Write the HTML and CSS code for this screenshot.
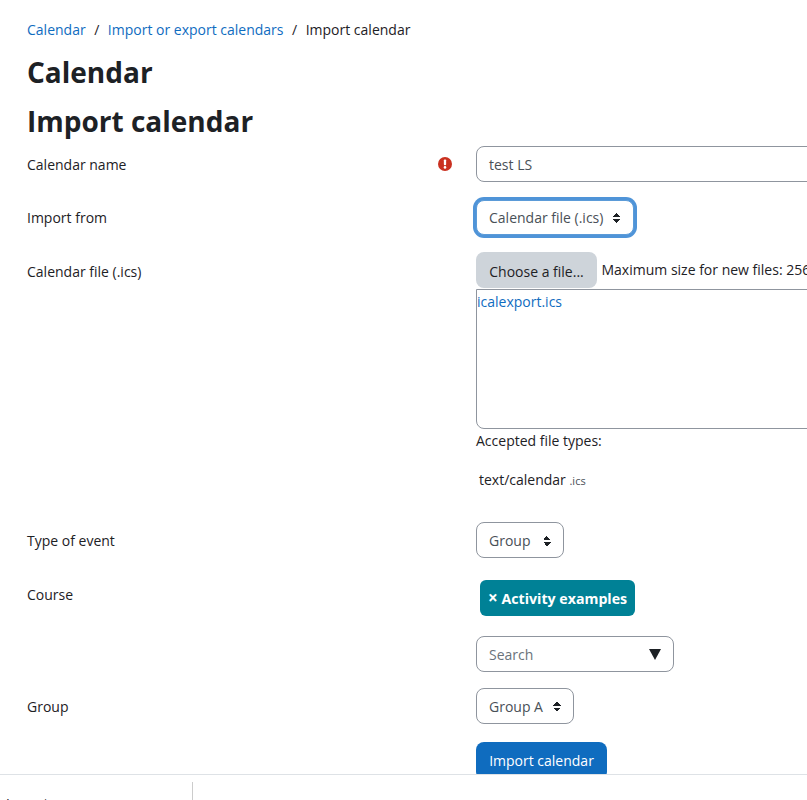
FILE: index.html
```html
<!DOCTYPE html>
<html lang="en">
<head>
    <meta charset="UTF-8">
    <title>Import calendar</title>
    <link rel="stylesheet" href="styles.css">
</head>
<body>
    <div class="page">
        <nav class="breadcrumb">
            <a href="#">Calendar</a>
            <span class="sep">/</span>
            <a href="#">Import or export calendars</a>
            <span class="sep">/</span>
            <span>Import calendar</span>
        </nav>
        <h2 class="title">Calendar</h2>
        <h2 class="title second">Import calendar</h2>

        <form class="form">
            <div class="row row-name">
                <label class="label">Calendar name</label>
                <svg class="required" viewBox="0 0 16 16" width="14" height="14">
                    <circle cx="8" cy="8" r="8" fill="#ca3120"/>
                    <rect x="6.7" y="2.8" width="2.6" height="6.6" rx="1" fill="#fff"/>
                    <circle cx="8" cy="11.9" r="1.5" fill="#fff"/>
                </svg>
                <div class="field"><div class="input wide">test LS</div></div>
            </div>
            <div class="row row-from">
                <label class="label">Import from</label>
                <div class="field">
                    <div class="select focused">Calendar file (.ics) <span class="arrows"></span></div>
                </div>
            </div>
            <div class="row row-file">
                <label class="label">Calendar file (.ics)</label>
                <div class="field">
                    <div class="picker">
                        <button type="button" class="btn-file">Choose a file...</button>
                        <span class="max">Maximum size for new files: 256 MB</span>
                    </div>
                    <div class="filebox"><a href="#">icalexport.ics</a></div>
                    <p class="accepted">Accepted file types:</p>
                    <p class="types">text/calendar <small>.ics</small></p>
                </div>
            </div>
            <div class="row row-type">
                <label class="label">Type of event</label>
                <div class="field">
                    <div class="select group">Group <span class="arrows"></span></div>
                </div>
            </div>
            <div class="row row-course">
                <label class="label">Course</label>
                <div class="field">
                    <div class="badge"><span class="times">×</span> Activity examples</div>
                    <div class="search">Search <span class="down"></span></div>
                </div>
            </div>
            <div class="row row-group">
                <label class="label">Group</label>
                <div class="field">
                    <div class="select group-a">Group A <span class="arrows"></span></div>
                </div>
            </div>
            <div class="row row-submit">
                <div class="label"></div>
                <div class="field"><button type="button" class="btn-primary">Import calendar</button></div>
            </div>
        </form>
    </div>

    <footer class="footer">
        <span class="footer-text">Jump to...</span>
        <span class="footer-line"></span>
    </footer>
</body>
</html>
```
FILE: styles.css
```css
html, body {
    margin: 0;
    height: 800px;
    overflow: hidden;
}
body {
    font-family: "Open Sans", "Noto Sans", Arial, sans-serif;
    font-size: 14px;
    color: #1d2125;
    background: #fff;
}
a {
    color: #0f6cbf;
    text-decoration: none;
}
.page {
    width: 1100px;
    padding: 20px 0 0 27px;
}
.breadcrumb {
    display: flex;
    gap: 8.5px;
    height: 20px;
    line-height: 20px;
}
.title {
    margin: 0;
    font-size: 28px;
    line-height: 40px;
    margin-top: 12px;
    font-weight: 700;
}
.title.second {
    margin-top: 9px;
}
.form {
    margin-top: 5px;
}
.row {
    display: grid;
    grid-template-columns: 449px 1fr;
    position: relative;
}
.label {
    line-height: 20px;
    padding-top: 9px;
}
.required {
    position: absolute;
    left: 411px;
    top: 11px;
}
.input, .select, .search {
    box-sizing: border-box;
    height: 36px;
    line-height: 36px;
    border: 1px solid #8f959e;
    border-radius: 8px;
    padding: 0 12px;
    color: #495057;
    background: #fff;
}
.input.wide {
    width: 500px;
}
.row-name {
    height: 53px;
}
.row-from {
    height: 53px;
}
.select {
    display: inline-flex;
    align-items: center;
    justify-content: space-between;
    padding-top: 2px;
}
.select.focused {
    width: 158px;
    height: 35px;
    margin-top: 1px;
    padding-top: 0;
    border-color: #5b9bd8;
    box-shadow: 0 0 0 3px #4f94d8;
}
.select.group {
    width: 88px;
}
.select.group-a {
    width: 98px;
}
.arrows {
    display: inline-block;
    width: 8px;
    height: 10px;
    flex: none;
    background:
        linear-gradient(to top right, transparent 50%, #1d2125 50%) 0 6px / 4px 4px no-repeat,
        linear-gradient(to top left, transparent 50%, #1d2125 50%) 4px 6px / 4px 4px no-repeat,
        linear-gradient(to bottom right, transparent 50%, #1d2125 50%) 0 0 / 4px 4px no-repeat,
        linear-gradient(to bottom left, transparent 50%, #1d2125 50%) 4px 0 / 4px 4px no-repeat;
}
.picker {
    display: flex;
    align-items: flex-start;
    gap: 4.5px;
    height: 37px;
}
.btn-file {
    width: 121px;
    height: 36px;
    padding: 2px 0 0;
    border: none;
    border-radius: 8px;
    background: #ced4da;
    color: #1d2125;
    font: inherit;
}
.max {
    line-height: 36px;
    white-space: nowrap;
}
.filebox {
    box-sizing: border-box;
    width: 500px;
    height: 140px;
    border: 1px solid #8f959e;
    border-radius: 0 0 8px 8px;
    line-height: 24px;
}
.accepted {
    margin: 2px 0 0;
    line-height: 20px;
}
.types {
    margin: 19px 0 0 3px;
    line-height: 20px;
}
.types small {
    font-size: 11px;
    color: #495057;
}
.row-file {
    height: 270px;
}
.row-file .label {
    padding-top: 10px;
}
.row-type {
    height: 54px;
}
.row-course {
    height: 112px;
}
.badge {
    display: inline-block;
    box-sizing: border-box;
    width: 155px;
    height: 36px;
    margin: 4px 0 0 4px;
    padding-left: 8px;
    line-height: 35px;
    border-radius: 6px;
    background: #008196;
    color: #fff;
    font-weight: 700;
    font-size: 14.2px;
    white-space: nowrap;
}
.times {
    font-size: 17px;
}
.search {
    display: flex;
    justify-content: space-between;
    align-items: center;
    width: 198px;
    margin-top: 20px;
    padding-top: 2px;
    color: #6a737b;
}
.down {
    width: 0;
    height: 0;
    margin-top: -2px;
    border-left: 6px solid transparent;
    border-right: 6px solid transparent;
    border-top: 11px solid #1d2125;
}
.row-group {
    height: 54px;
}
.btn-primary {
    height: 38px;
    width: 131px;
    padding: 0 0 2px;
    border: none;
    border-radius: 8px;
    background: #0f6cbf;
    color: #fff;
    font: inherit;
}
.footer {
    position: fixed;
    left: 0;
    right: 0;
    top: 774px;
    height: 26px;
    background: #fff;
    border-top: 1px solid #dee2e6;
    overflow: hidden;
}
.footer-text {
    position: absolute;
    left: 6px;
    top: 19px;
    color: #1d2125;
}
.footer-line {
    position: absolute;
    left: 192px;
    top: 7px;
    height: 20px;
    border-left: 1px solid #ccc;
}
```
